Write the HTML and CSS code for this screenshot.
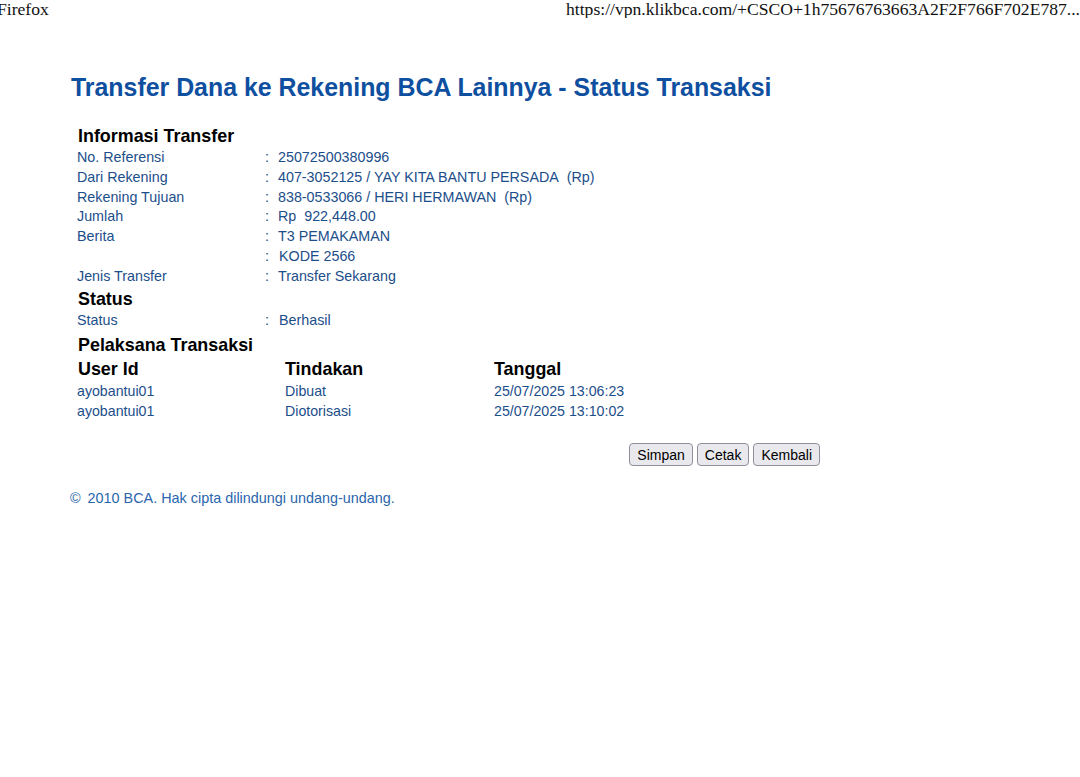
FILE: index.html
```html
<!DOCTYPE html>
<html lang="en">
<head>
    <meta charset="UTF-8">
    <title>Transfer Dana ke Rekening BCA Lainnya - Status Transaksi</title>
    <link rel="stylesheet" href="styles.css">
</head>
<body>
    <div class="print-header">
        <span class="browser">Firefox</span>
        <span class="url">https://vpn.klikbca.com/+CSCO+1h75676763663A2F2F766F702E787...</span>
    </div>

    <div class="page">
        <h1 class="title">Transfer Dana ke Rekening BCA Lainnya - Status Transaksi</h1>

        <div class="section-title">Informasi Transfer</div>
        <table class="info">
            <tr><td class="label">No. Referensi</td><td class="colon">:</td><td>25072500380996</td></tr>
            <tr><td class="label">Dari Rekening</td><td class="colon">:</td><td>407-3052125 / YAY KITA BANTU PERSADA&nbsp; (Rp)</td></tr>
            <tr><td class="label">Rekening Tujuan</td><td class="colon">:</td><td>838-0533066 / HERI HERMAWAN&nbsp; (Rp)</td></tr>
            <tr><td class="label">Jumlah</td><td class="colon">:</td><td>Rp&nbsp; 922,448.00</td></tr>
            <tr><td class="label">Berita</td><td class="colon">:</td><td>T3 PEMAKAMAN</td></tr>
            <tr><td class="label"></td><td class="colon">:</td><td class="nudge">KODE 2566</td></tr>
            <tr><td class="label">Jenis Transfer</td><td class="colon">:</td><td>Transfer Sekarang</td></tr>
        </table>

        <div class="section-title">Status</div>
        <table class="info">
            <tr><td class="label">Status</td><td class="colon">:</td><td class="nudge">Berhasil</td></tr>
        </table>

        <div class="section-title actor-title">Pelaksana Transaksi</div>
        <table class="actors">
            <tr><th class="col-user">User Id</th><th class="col-action">Tindakan</th><th>Tanggal</th></tr>
            <tr><td>ayobantui01</td><td>Dibuat</td><td>25/07/2025 13:06:23</td></tr>
            <tr><td>ayobantui01</td><td>Diotorisasi</td><td>25/07/2025 13:10:02</td></tr>
        </table>

        <div class="actions">
            <button class="btn">Simpan</button>
            <button class="btn">Cetak</button>
            <button class="btn">Kembali</button>
        </div>

        <div class="footer"><span class="copy">&copy;</span> 2010 BCA. Hak cipta dilindungi undang-undang.</div>
    </div>
</body>
</html>
```

FILE: styles.css
```css
body {
    margin: 0;
    background: #fff;
    font-family: "Liberation Sans", Arial, sans-serif;
}

.print-header {
    display: flex;
    justify-content: space-between;
    font-family: "Liberation Serif", "Times New Roman", serif;
    font-size: 17.6px;
    color: #111;
    line-height: 18px;
    white-space: nowrap;
    overflow: hidden;
}

.print-header .browser {
    margin-left: -3px;
}

.page {
    padding: 0 0 0 71px;
    width: 750px;
}

.title {
    margin: 51px 0 0 0;
    font-size: 24.9px;
    line-height: 36px;
    color: #0f4fa0;
    font-weight: bold;
}

.section-title {
    margin-left: 7px;
    font-size: 17.9px;
    font-weight: bold;
    color: #000;
    line-height: 24px;
}

.title + .section-title {
    margin-top: 19px;
}

.actor-title {
    margin-top: 3px;
}

table {
    border-collapse: collapse;
}

.info {
    margin-left: 6px;
}

.info td {
    padding: 0;
    font-size: 14.3px;
    line-height: 19.8px;
    color: #1c4e8a;
    white-space: nowrap;
}

.info .label {
    width: 188px;
}

.info .colon {
    width: 13px;
}

.info .nudge {
    padding-left: 1px;
}

.actors {
    margin-left: 6px;
}

.actors th {
    text-align: left;
    font-size: 17.9px;
    font-weight: bold;
    color: #000;
    padding: 0;
    line-height: 24px;
}

.actors td {
    padding: 0;
    font-size: 14.2px;
    line-height: 20px;
    color: #1c4e8a;
}

.actors .col-user {
    width: 207px;
    padding-left: 1px;
}

.actors .col-action {
    width: 209px;
}

.actions {
    display: flex;
    justify-content: flex-end;
    gap: 4px;
    margin-top: 22px;
    padding-right: 1px;
}

.btn {
    font-family: "Liberation Sans", Arial, sans-serif;
    font-size: 14px;
    color: #000;
    background: #e9e9ed;
    border: 1px solid #8f8f9d;
    border-radius: 4px;
    padding: 2px 7px;
    height: 23px;
}

.footer {
    margin-top: 24px;
    margin-left: -1px;
    font-size: 14.4px;
    color: #2a66ad;
}

.footer .copy {
    margin-right: 3px;
}
```
